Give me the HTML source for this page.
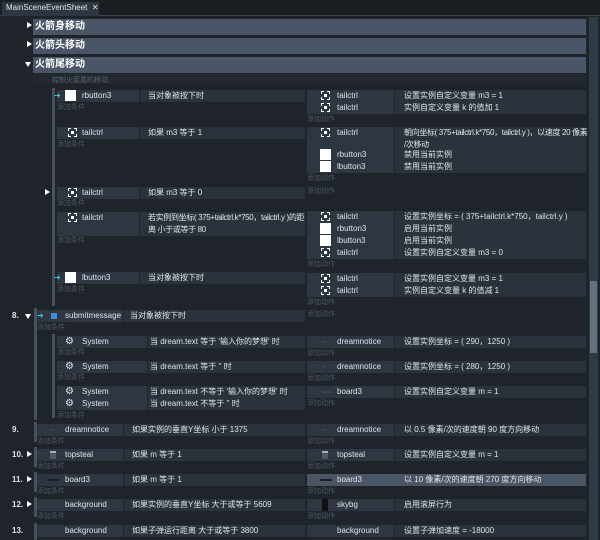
<!DOCTYPE html><html><head><meta charset="utf-8"><style>
*{margin:0;padding:0;box-sizing:border-box}
body{width:600px;height:540px;background:#1f242a;font-family:"Liberation Sans","Noto Sans CJK SC",sans-serif;font-size:8px;color:#dfe4ea;position:relative;overflow:hidden}
div{position:absolute}
.t{white-space:nowrap;line-height:12px}
.c{background:#2a323b;height:12px}
.n{background:#2e3741;height:12px}
.add{color:#4d5761;font-size:7px;line-height:10px}
.g{left:33px;width:553px;height:16px;background:#4a5667;color:#fff;font-weight:bold;font-size:10px;line-height:16px;padding-left:2px}
.tri{width:0;height:0;border-left:5px solid #fff;border-top:3px solid transparent;border-bottom:3px solid transparent}
.trd{width:0;height:0;border-top:5px solid #fff;border-left:3px solid transparent;border-right:3px solid transparent}
.bar{background:#46515c;width:3px}
.ws{background:#fff;width:11px;height:11px}
.tc{width:9px;height:9px;border:1px dashed #fff}
.tc::after{content:"";position:absolute;left:2px;top:2px;width:3px;height:3px;background:#fff}
.gear{font-size:10px;line-height:12px}
.sq{letter-spacing:-0.35px}
</style></head><body>
<div style="left:0;top:0;width:600px;height:16px;background:#1a1e23;border-bottom:1px solid #3a444f"></div>
<div style="left:2px;top:2px;width:97px;height:14px;background:#2d3742"></div>
<div class="t" style="left:6px;top:2px;font-size:8px">MainSceneEventSheet&nbsp;&nbsp;✕</div>
<div style="left:589px;top:17px;width:9px;height:523px;background:#2e3a44"></div>
<div style="left:590px;top:281px;width:7px;height:72px;background:#62717e"></div>

<div class="tri" style="left:27px;top:22px"></div><div class="g" style="top:19px">火箭身移动</div>
<div class="tri" style="left:27px;top:41px"></div><div class="g" style="top:38px">火箭头移动</div>
<div class="trd" style="left:25px;top:62px"></div><div class="g" style="top:57px">火箭尾移动</div>
<div style="left:33px;top:74px;width:553px;height:10px;background:#23282e"></div>
<div class="add" style="left:52px;top:76px;color:#5a636d">控制火箭尾的移动</div>

<div class="bar" style="left:52px;top:88px;height:218px"></div>
<div class="n" style="left:57px;top:90px;width:82px"></div><div class="c" style="left:140px;top:90px;width:165px"></div>
<div class="t" style="left:54px;top:90px;color:#3cc8d8">➜</div><div class="ws" style="left:65px;top:90px"></div>
<div class="t" style="left:82px;top:90px">rbutton3</div><div class="t" style="left:148px;top:90px">当对象被按下时</div>
<div class="add" style="left:57px;top:103px">添加条件</div>
<div class="n" style="left:57px;top:127px;width:82px"></div><div class="c" style="left:140px;top:127px;width:165px"></div>
<div class="tc" style="left:68px;top:128px"></div><div class="t" style="left:82px;top:127px">tailctrl</div><div class="t" style="left:148px;top:127px">如果 m3 等于 1</div>
<div class="add" style="left:57px;top:140px">添加条件</div>
<div class="tri" style="left:45px;top:189px"></div>
<div class="n" style="left:57px;top:187px;width:82px"></div><div class="c" style="left:140px;top:187px;width:165px"></div>
<div class="tc" style="left:68px;top:188px"></div><div class="t" style="left:82px;top:187px">tailctrl</div><div class="t" style="left:148px;top:187px">如果 m3 等于 0</div>
<div class="add" style="left:57px;top:199px">添加条件</div>
<div class="n" style="left:57px;top:212px;width:82px;height:24px"></div><div class="c" style="left:140px;top:212px;width:165px;height:24px"></div>
<div class="tc" style="left:68px;top:213px"></div><div class="t" style="left:82px;top:212px">tailctrl</div>
<div class="t sq" style="left:148px;top:212px">若实例到坐标( 375+tailctrl.k*750，tailctrl.y )的距<br>离 小于或等于 80</div>
<div class="add" style="left:57px;top:236px">添加条件</div>
<div class="n" style="left:57px;top:272px;width:82px"></div><div class="c" style="left:140px;top:272px;width:165px"></div>
<div class="t" style="left:54px;top:272px;color:#3cc8d8">➜</div><div class="ws" style="left:65px;top:272px"></div>
<div class="t" style="left:82px;top:272px">lbutton3</div><div class="t" style="left:148px;top:272px">当对象被按下时</div>
<div class="add" style="left:57px;top:285px">添加条件</div>

<div class="n" style="left:307px;top:90px;width:87px;height:24px"></div><div class="c" style="left:395px;top:90px;width:191px;height:24px"></div>
<div class="tc" style="left:321px;top:91px"></div><div class="t" style="left:337px;top:90px">tailctrl</div><div class="t" style="left:404px;top:90px">设置实例自定义变量 m3 = 1</div>
<div class="tc" style="left:321px;top:103px"></div><div class="t" style="left:337px;top:102px">tailctrl</div><div class="t" style="left:404px;top:102px">实例自定义变量 k 的值加 1</div>
<div class="add" style="left:307px;top:115px">添加动作</div>
<div class="n" style="left:307px;top:127px;width:87px;height:46px"></div><div class="c" style="left:395px;top:127px;width:191px;height:46px"></div>
<div class="tc" style="left:321px;top:128px"></div><div class="t" style="left:337px;top:127px">tailctrl</div><div class="t sq" style="left:404px;top:127px">朝向坐标( 375+tailctrl.k*750，tailctrl.y )，以速度 20 像素<br>/次移动</div>
<div class="ws" style="left:320px;top:149px"></div><div class="t" style="left:337px;top:149px">rbutton3</div><div class="t" style="left:404px;top:149px">禁用当前实例</div>
<div class="ws" style="left:320px;top:161px"></div><div class="t" style="left:337px;top:161px">lbutton3</div><div class="t" style="left:404px;top:161px">禁用当前实例</div>
<div class="add" style="left:307px;top:174px">添加动作</div>
<div class="add" style="left:307px;top:187px">添加动作</div>
<div class="n" style="left:307px;top:211px;width:87px;height:48px"></div><div class="c" style="left:395px;top:211px;width:191px;height:48px"></div>
<div class="tc" style="left:321px;top:212px"></div><div class="t" style="left:337px;top:211px">tailctrl</div><div class="t" style="left:404px;top:211px">设置实例坐标 = ( 375+tailctrl.k*750，tailctrl.y )</div>
<div class="ws" style="left:320px;top:223px"></div><div class="t" style="left:337px;top:223px">rbutton3</div><div class="t" style="left:404px;top:223px">启用当前实例</div>
<div class="ws" style="left:320px;top:235px"></div><div class="t" style="left:337px;top:235px">lbutton3</div><div class="t" style="left:404px;top:235px">启用当前实例</div>
<div class="tc" style="left:321px;top:248px"></div><div class="t" style="left:337px;top:247px">tailctrl</div><div class="t" style="left:404px;top:247px">设置实例自定义变量 m3 = 0</div>
<div class="add" style="left:307px;top:260px">添加动作</div>
<div class="n" style="left:307px;top:273px;width:87px;height:24px"></div><div class="c" style="left:395px;top:273px;width:191px;height:24px"></div>
<div class="tc" style="left:321px;top:274px"></div><div class="t" style="left:337px;top:273px">tailctrl</div><div class="t" style="left:404px;top:273px">设置实例自定义变量 m3 = 1</div>
<div class="tc" style="left:321px;top:286px"></div><div class="t" style="left:337px;top:285px">tailctrl</div><div class="t" style="left:404px;top:285px">实例自定义变量 k 的值减 1</div>
<div class="add" style="left:307px;top:298px">添加动作</div>

<div class="t" style="left:12px;top:310px;font-weight:bold">8.</div><div class="trd" style="left:25px;top:314px"></div>
<div class="bar" style="left:34px;top:308px;height:112px"></div>
<div class="n" style="left:37px;top:310px;width:86px"></div><div class="c" style="left:124px;top:310px;width:181px"></div>
<div class="t" style="left:37px;top:310px;color:#3cc8d8">➜</div><div style="left:51px;top:313px;width:6px;height:6px;background:#3a8ed8"></div>
<div class="t" style="left:65px;top:310px">submitmessage</div><div class="t" style="left:130px;top:310px">当对象被按下时</div>
<div class="add" style="left:37px;top:323px">添加条件</div>
<div class="add" style="left:307px;top:310px">添加动作</div>
<div class="bar" style="left:52px;top:334px;height:84px"></div>
<div class="n" style="left:57px;top:336px;width:90px"></div><div class="c" style="left:148px;top:336px;width:157px"></div>
<div class="t gear" style="left:65px;top:336px">⚙</div><div class="t" style="left:82px;top:336px">System</div><div class="t" style="left:150px;top:336px">当 dream.text 等于 '输入你的梦想' 时</div>
<div class="add" style="left:57px;top:348px">添加条件</div>
<div class="n" style="left:57px;top:361px;width:90px"></div><div class="c" style="left:148px;top:361px;width:157px"></div>
<div class="t gear" style="left:65px;top:361px">⚙</div><div class="t" style="left:82px;top:361px">System</div><div class="t" style="left:150px;top:361px">当 dream.text 等于 '' 时</div>
<div class="add" style="left:57px;top:373px">添加条件</div>
<div class="n" style="left:57px;top:386px;width:90px;height:24px"></div><div class="c" style="left:148px;top:386px;width:157px;height:24px"></div>
<div class="t gear" style="left:65px;top:386px">⚙</div><div class="t" style="left:82px;top:386px">System</div><div class="t" style="left:150px;top:386px">当 dream.text 不等于 '输入你的梦想' 时</div>
<div class="t gear" style="left:65px;top:398px">⚙</div><div class="t" style="left:82px;top:398px">System</div><div class="t" style="left:150px;top:398px">当 dream.text 不等于 '' 时</div>
<div class="add" style="left:57px;top:411px">添加条件</div>
<div class="n" style="left:307px;top:336px;width:87px"></div><div class="c" style="left:395px;top:336px;width:191px"></div>
<div class="t" style="left:322px;top:336px;color:#778">··</div><div class="t" style="left:337px;top:336px">dreamnotice</div><div class="t" style="left:404px;top:336px">设置实例坐标 = ( 290，1250 )</div>
<div class="add" style="left:307px;top:349px">添加动作</div>
<div class="n" style="left:307px;top:361px;width:87px"></div><div class="c" style="left:395px;top:361px;width:191px"></div>
<div class="t" style="left:322px;top:361px;color:#778">··</div><div class="t" style="left:337px;top:361px">dreamnotice</div><div class="t" style="left:404px;top:361px">设置实例坐标 = ( 280，1250 )</div>
<div class="add" style="left:307px;top:374px">添加动作</div>
<div class="n" style="left:307px;top:386px;width:87px"></div><div class="c" style="left:395px;top:386px;width:191px"></div>
<div style="left:322px;top:391px;width:10px;height:2px;background:#3a4450"></div><div class="t" style="left:337px;top:386px">board3</div><div class="t" style="left:404px;top:386px">设置实例自定义变量 m = 1</div>
<div class="add" style="left:307px;top:399px">添加动作</div>

<div class="t" style="left:12px;top:424px;font-weight:bold">9.</div>
<div class="bar" style="left:34px;top:422px;height:20px"></div>
<div class="n" style="left:37px;top:424px;width:86px"></div><div class="c" style="left:124px;top:424px;width:181px"></div>
<div class="t" style="left:50px;top:424px;color:#778">··</div><div class="t" style="left:65px;top:424px">dreamnotice</div><div class="t" style="left:132px;top:424px">如果实例的垂直Y坐标 小于 1375</div>
<div class="add" style="left:37px;top:437px">添加条件</div>
<div class="n" style="left:307px;top:424px;width:87px"></div><div class="c" style="left:395px;top:424px;width:191px"></div>
<div class="t" style="left:322px;top:424px;color:#778">··</div><div class="t" style="left:337px;top:424px">dreamnotice</div><div class="t" style="left:404px;top:424px">以 0.5 像素/次的速度朝 90 度方向移动</div>
<div class="add" style="left:307px;top:437px">添加动作</div>

<div class="t" style="left:12px;top:449px;font-weight:bold">10.</div><div class="tri" style="left:27px;top:451px"></div>
<div class="bar" style="left:34px;top:447px;height:20px"></div>
<div class="n" style="left:37px;top:449px;width:86px"></div><div class="c" style="left:124px;top:449px;width:181px"></div>
<div style="left:50px;top:451px;width:6px;height:8px;border-top:2px solid #aab;background:#556"></div><div class="t" style="left:65px;top:449px">topsteal</div><div class="t" style="left:132px;top:449px">如果 m 等于 1</div>
<div class="add" style="left:37px;top:462px">添加条件</div>
<div class="n" style="left:307px;top:449px;width:87px"></div><div class="c" style="left:395px;top:449px;width:191px"></div>
<div style="left:322px;top:451px;width:6px;height:8px;border-top:2px solid #aab;background:#556"></div><div class="t" style="left:337px;top:449px">topsteal</div><div class="t" style="left:404px;top:449px">设置实例自定义变量 m = 1</div>
<div class="add" style="left:307px;top:462px">添加动作</div>

<div class="t" style="left:12px;top:474px;font-weight:bold">11.</div><div class="tri" style="left:27px;top:476px"></div>
<div class="bar" style="left:34px;top:472px;height:20px"></div>
<div class="n" style="left:37px;top:474px;width:86px"></div><div class="c" style="left:124px;top:474px;width:181px"></div>
<div style="left:47px;top:479px;width:12px;height:2px;background:#1a2028"></div><div class="t" style="left:65px;top:474px">board3</div><div class="t" style="left:132px;top:474px">如果 m 等于 1</div>
<div class="add" style="left:37px;top:487px">添加条件</div>
<div style="left:307px;top:474px;width:279px;height:12px;background:#4a5665"></div>
<div style="left:320px;top:479px;width:12px;height:2px;background:#1a2028"></div><div class="t" style="left:337px;top:474px">board3</div><div class="t" style="left:404px;top:474px">以 10 像素/次的速度朝 270 度方向移动</div>
<div class="add" style="left:307px;top:487px">添加动作</div>

<div class="t" style="left:12px;top:499px;font-weight:bold">12.</div><div class="tri" style="left:27px;top:501px"></div>
<div class="bar" style="left:34px;top:497px;height:20px"></div>
<div class="n" style="left:37px;top:499px;width:86px"></div><div class="c" style="left:124px;top:499px;width:181px"></div>
<div class="t" style="left:65px;top:499px">background</div><div class="t" style="left:132px;top:499px">如果实例的垂直Y坐标 大于或等于 5609</div>
<div class="add" style="left:37px;top:512px">添加条件</div>
<div class="n" style="left:307px;top:499px;width:87px"></div><div class="c" style="left:395px;top:499px;width:191px"></div>
<div style="left:322px;top:499px;width:6px;height:12px;background:#111"></div><div class="t" style="left:337px;top:499px">skybg</div><div class="t" style="left:404px;top:499px">启用滚屏行为</div>
<div class="add" style="left:307px;top:512px">添加动作</div>

<div class="t" style="left:12px;top:525px;font-weight:bold">13.</div>
<div class="bar" style="left:34px;top:523px;height:17px"></div>
<div class="n" style="left:37px;top:525px;width:86px"></div><div class="c" style="left:124px;top:525px;width:181px"></div>
<div class="t" style="left:65px;top:525px">background</div><div class="t" style="left:132px;top:525px">如果子弹运行距离 大于或等于 3800</div>
<div class="n" style="left:307px;top:525px;width:87px"></div><div class="c" style="left:395px;top:525px;width:191px"></div>
<div class="t" style="left:337px;top:525px">background</div><div class="t" style="left:404px;top:525px">设置子弹加速度 = -18000</div>
</body></html>
